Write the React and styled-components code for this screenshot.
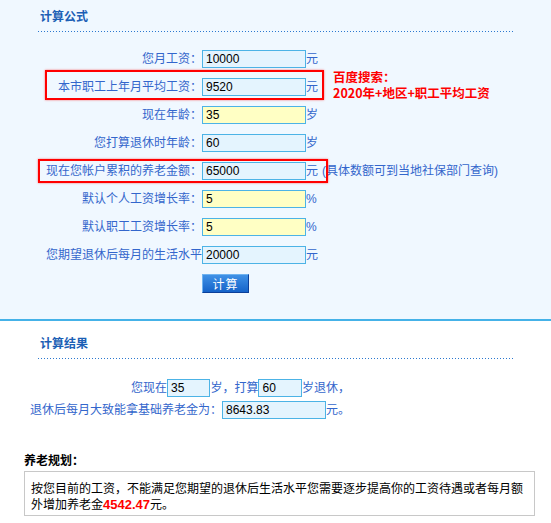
import React from "react";
import styled, { createGlobalStyle } from "styled-components";

const GlobalStyle = createGlobalStyle`
  html, body { margin: 0; padding: 0; background: #ffffff; }
  body {
    font-family: "Liberation Sans", "Noto Sans CJK SC", sans-serif;
    font-size: 12px;
  }
  * { box-sizing: border-box; }
`;

const Page = styled.div`
  width: 551px;
  min-height: 523px;
  background: #ffffff;
  overflow: hidden;
`;

const FormPanel = styled.section`
  background: #f0f8ff;
  border-bottom: 2px solid #45b2e8;
  padding: 9px 0 26px;
`;

const ResultPanel = styled.section`
  padding-top: 15px;
`;

const SectionTitle = styled.h2`
  margin: 0;
  padding-left: 40px;
  font-size: 12px;
  line-height: 16px;
  font-weight: bold;
  color: #1c5fb5;
`;

const DottedRule = styled.div`
  margin: 6px 36px 0 38px;
  height: 1px;
  background-image: linear-gradient(to right, #2b78d0 1px, transparent 1px);
  background-size: 3px 1px;
  background-repeat: repeat-x;
`;

const FieldList = styled.div`
  margin-top: 18px;
  display: flex;
  flex-direction: column;
  gap: 10px;
`;

const FieldRow = styled.div`
  position: relative;
  display: flex;
  align-items: center;
  height: 18px;
  ${({ $mark }) =>
    $mark &&
    `
    &::before {
      content: "";
      position: absolute;
      top: ${$mark.top}px;
      bottom: ${$mark.bottom}px;
      left: ${$mark.left}px;
      width: ${$mark.width}px;
      border: 2px solid #ff0000;
      box-shadow: 0 0 2px rgba(255, 0, 0, 0.55);
      pointer-events: none;
    }
  `}
`;

const FieldLabel = styled.label`
  flex: 0 0 202px;
  width: 202px;
  text-align: right;
  white-space: nowrap;
  color: #3366cc;
  line-height: 18px;
`;

const TextInput = styled.input`
  flex: 0 0 auto;
  width: ${({ $w }) => $w || 104}px;
  height: 18px;
  margin: 0;
  padding: 0 3px;
  border: 1px solid #4cb3e6;
  border-radius: 0;
  background: ${({ $tone }) => ($tone === "yellow" ? "#ffffc4" : "#e4f4fe")};
  font-family: "Liberation Sans", sans-serif;
  font-size: 12px;
  color: #000000;
  outline: none;
`;

const Unit = styled.span`
  color: #3366cc;
  line-height: 18px;
  white-space: nowrap;
`;

const Hint = styled.span`
  margin-left: 4px;
  color: #3366cc;
  line-height: 18px;
  white-space: nowrap;
`;

const Note = styled.div`
  position: absolute;
  left: 333px;
  top: -9px;
  color: #ff0000;
  font-family: "Noto Sans CJK SC", sans-serif;
  font-weight: bold;
  font-size: 12.5px;
  line-height: 16px;
  white-space: nowrap;
`;

const ButtonRow = styled.div`
  display: flex;
  padding-left: 202px;
`;

const SubmitButton = styled.button`
  width: 47px;
  height: 19px;
  padding: 0;
  margin: 0;
  border: 1px solid;
  border-color: #6fb3f0 #0b3f99 #0b3f99 #6fb3f0;
  background: linear-gradient(#3f91e6, #1563c9);
  color: #ffffff;
  font-family: "Noto Sans CJK SC", sans-serif;
  font-size: 12px;
  letter-spacing: 1px;
  line-height: 17px;
  cursor: pointer;
`;

const ResultList = styled.div`
  margin-top: 20px;
  width: 350px;
  display: flex;
  flex-direction: column;
  gap: 4px;
`;

const ResultRow = styled.div`
  display: flex;
  justify-content: flex-end;
  align-items: center;
  height: 18px;
`;

const ResultText = styled.span`
  color: #3366cc;
  line-height: 18px;
  white-space: nowrap;
`;

const PlanTitle = styled.h3`
  margin: 34px 0 0;
  padding-left: 24px;
  font-size: 12px;
  line-height: 16px;
  font-weight: bold;
  color: #000000;
`;

const PlanBox = styled.div`
  margin: 2px 16px 0 24px;
  padding: 8px 6px 2px;
  border: 1px solid #c8c8c8;
  background: #ffffff;
  color: #000000;
  font-family: "Noto Sans CJK SC", sans-serif;
  font-size: 12px;
  line-height: 16px;
`;

const Amount = styled.strong`
  color: #ff0000;
  font-family: "Liberation Sans", sans-serif;
  font-size: 13px;
  font-weight: bold;
`;

const fields = [
  { label: "您月工资：", value: "10000", unit: "元" },
  {
    label: "本市职工上年月平均工资：",
    value: "9520",
    unit: "元",
    mark: { top: -8, bottom: -4, left: 45, width: 275 },
    note: true,
  },
  { label: "现在年龄：", value: "35", unit: "岁", tone: "yellow" },
  { label: "您打算退休时年龄：", value: "60", unit: "岁" },
  {
    label: "现在您帐户累积的养老金额：",
    value: "65000",
    unit: "元",
    mark: { top: -3, bottom: -3, left: 38, width: 286 },
    hint: "(具体数额可到当地社保部门查询)",
  },
  { label: "默认个人工资增长率：", value: "5", unit: "%", tone: "yellow" },
  { label: "默认职工工资增长率：", value: "5", unit: "%", tone: "yellow" },
  { label: "您期望退休后每月的生活水平", value: "20000", unit: "元" },
];

export default function App() {
  return (
    <Page>
      <GlobalStyle />
      <FormPanel>
        <SectionTitle>计算公式</SectionTitle>
        <DottedRule />
        <FieldList>
          {fields.map((f) => (
            <FieldRow key={f.label} $mark={f.mark}>
              <FieldLabel>{f.label}</FieldLabel>
              <TextInput $tone={f.tone} defaultValue={f.value} />
              <Unit>{f.unit}</Unit>
              {f.hint && <Hint>{f.hint}</Hint>}
              {f.note && (
                <Note>
                  百度搜索：
                  <br />
                  2020年+地区+职工平均工资
                </Note>
              )}
            </FieldRow>
          ))}
          <ButtonRow>
            <SubmitButton type="button">计算</SubmitButton>
          </ButtonRow>
        </FieldList>
      </FormPanel>

      <ResultPanel>
        <SectionTitle>计算结果</SectionTitle>
        <DottedRule />
        <ResultList>
          <ResultRow>
            <ResultText>您现在</ResultText>
            <TextInput $w={43.5} defaultValue="35" />
            <ResultText>岁，打算</ResultText>
            <TextInput $w={43.5} defaultValue="60" />
            <ResultText>岁退休，</ResultText>
          </ResultRow>
          <ResultRow>
            <ResultText>退休后每月大致能拿基础养老金为：</ResultText>
            <TextInput $w={104} defaultValue="8643.83" />
            <ResultText>元。</ResultText>
          </ResultRow>
        </ResultList>

        <PlanTitle>养老规划：</PlanTitle>
        <PlanBox>
          按您目前的工资，不能满足您期望的退休后生活水平您需要逐步提高你的工资待遇或者每月额外增加养老金
          <Amount>4542.47</Amount>元。
        </PlanBox>
      </ResultPanel>
    </Page>
  );
}
